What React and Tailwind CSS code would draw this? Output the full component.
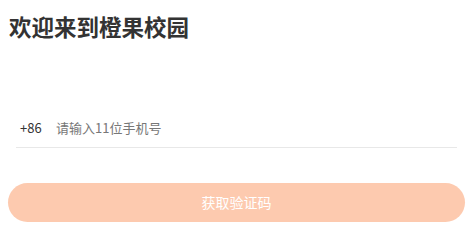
import React from "react";

function App() {
  return (
    <div
      className="w-[473px] h-[240px] bg-white overflow-hidden"
      style={{ fontFamily: '"Noto Sans CJK SC", "Noto Sans", sans-serif' }}
    >
      <h1 className="pl-[9px] pt-[10px] text-[22.5px] leading-[32px] font-bold text-[#333333]">
        欢迎来到橙果校园
      </h1>
      <div className="mt-[66px] mx-[16px] h-[40px] flex items-center border-b border-[#e8e8e8]">
        <span className="pl-[4px] text-[13px] text-[#333333] w-[40px]">+86</span>
        <span className="text-[13px] text-[#777777]">请输入11位手机号</span>
      </div>
      <div className="mt-[35px] mx-[8px]">
        <button className="w-full h-[39px] rounded-full bg-[#fdcaaf] text-white text-[14px]">
          获取验证码
        </button>
      </div>
    </div>
  );
}

export default App;
